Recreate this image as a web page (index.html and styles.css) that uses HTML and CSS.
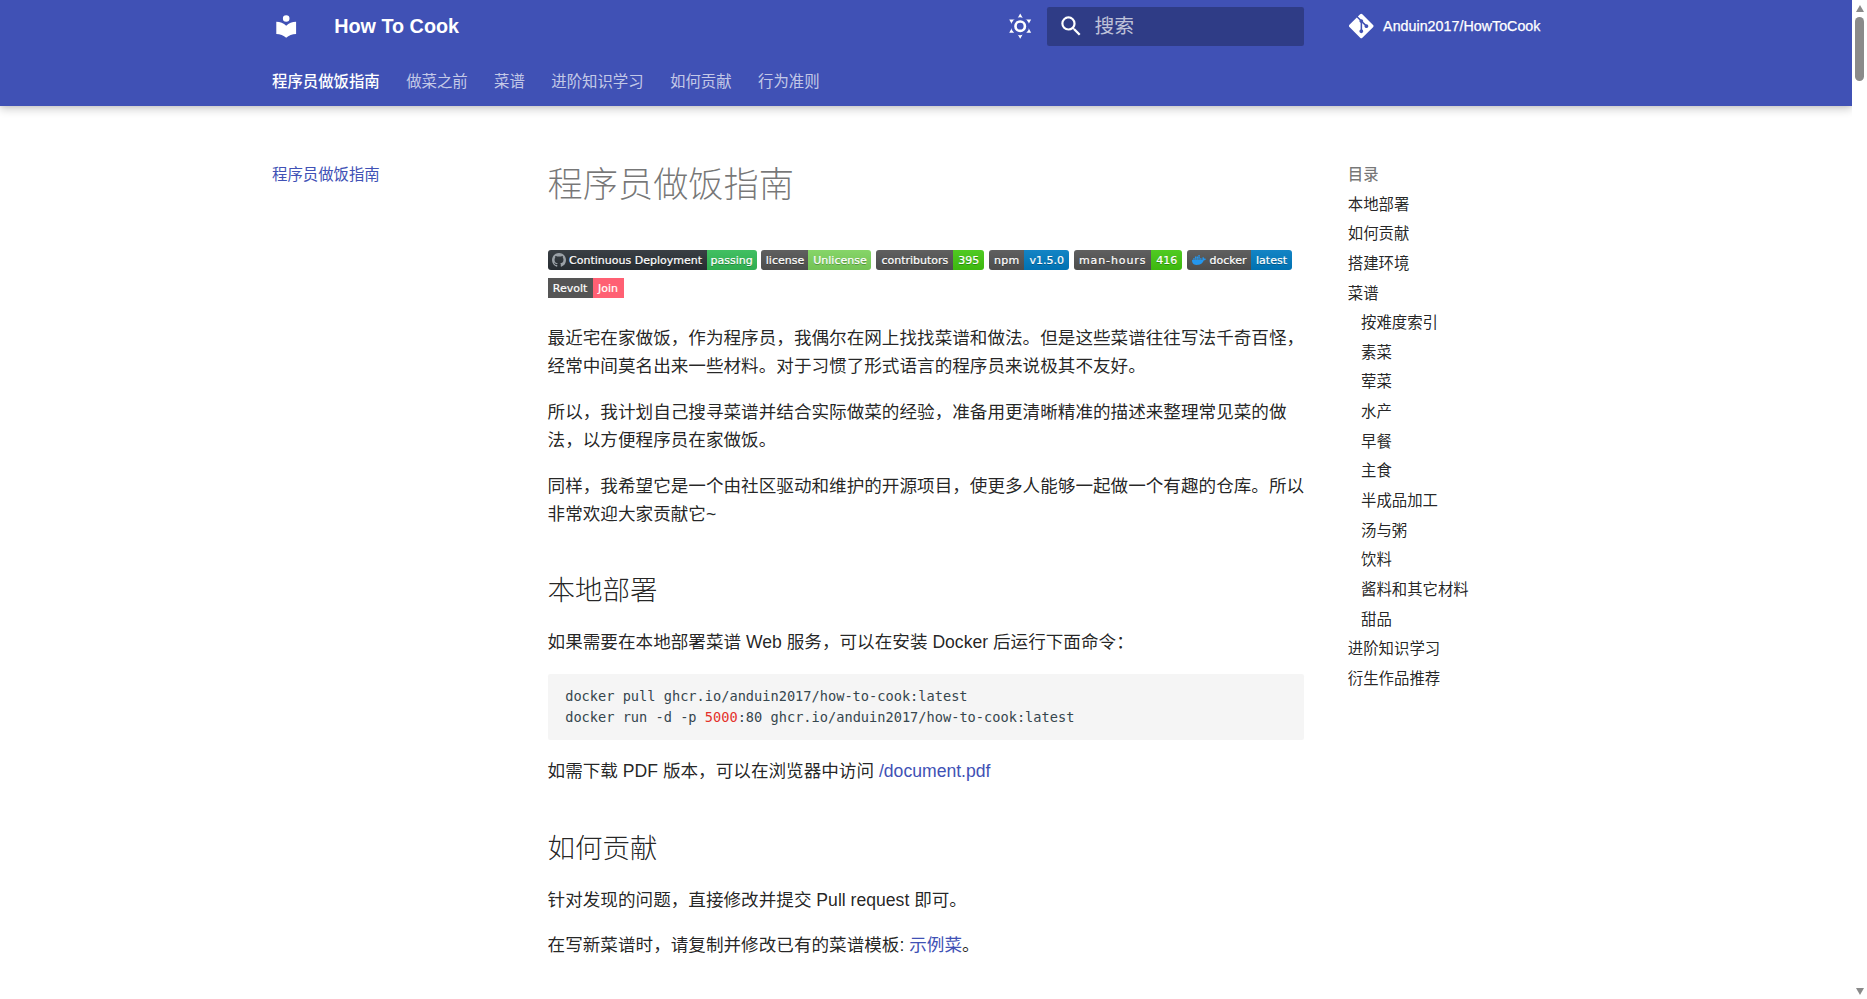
FILE: index.html
```html
<!DOCTYPE html>
<html lang="zh-CN">
<head>
<meta charset="utf-8">
<title>How To Cook</title>
<link rel="stylesheet" href="styles.css">
</head>
<body>
<div class="page">
  <div class="viewport">
    <header class="header">
      <div class="header-inner">
        <a class="logo" href="#"><svg class="icon" viewBox="0 0 24 24"><path d="M12 8a3 3 0 0 0 3-3 3 3 0 0 0-3-3 3 3 0 0 0-3 3 3 3 0 0 0 3 3m0 3.54C9.64 9.35 6.5 8 3 8v11c3.5 0 6.64 1.35 9 3.54 2.36-2.19 5.5-3.54 9-3.54V8c-3.5 0-6.64 1.35-9 3.54Z"/></svg></a>
        <div class="site-title">How To Cook</div>
        <button class="palette" type="button"><svg class="icon" viewBox="0 0 24 24"><path d="M12 .5 22 18 2 18Z"/><path d="M12 23.500 2 6 22 6Z"/><circle class="palette-gap" cx="12" cy="12" r="8.200"/><circle class="palette-ring" cx="12" cy="12" r="4.300"/></svg></button>
        <div class="search"><svg class="icon search-icon" viewBox="0 0 24 24"><path d="M9.500 3A6.500 6.500 0 0 1 16 9.500c0 1.610-.590 3.090-1.560 4.230l.270.270h.790l5 5-1.500 1.500-5-5v-.790l-.270-.270A6.516 6.516 0 0 1 9.500 16 6.500 6.500 0 0 1 3 9.500 6.500 6.500 0 0 1 9.500 3m0 2C7 5 5 7 5 9.500S7 14 9.500 14 14 12 14 9.500 12 5 9.500 5Z"/></svg><span class="search-label">搜索</span></div>
        <a class="source" href="#"><svg class="git-icon" viewBox="0 0 448 512"><path d="M439.550 236.050 244 40.450a28.870 28.870 0 0 0-40.810 0l-40.660 40.630 51.520 51.520c27.060-9.140 52.680 16.770 43.390 43.680l49.660 49.660c34.230-11.800 61.180 31 35.470 56.690-26.490 26.490-70.210-2.870-56-37.340L240.220 199v121.850c25.300 12.540 22.260 41.850 9.080 55a34.340 34.340 0 0 1-48.550 0c-17.570-17.600-11.070-46.910 11.250-56v-123c-20.800-8.510-24.600-30.740-18.640-45L142.570 101 8.450 235.140a28.860 28.860 0 0 0 0 40.810l195.610 195.600a28.860 28.860 0 0 0 40.800 0l194.690-194.690a28.860 28.860 0 0 0 0-40.810z"/></svg><span class="repo">Anduin2017/HowToCook</span></a>
      </div>
      <nav class="tabs">
        <a class="tab tab-active" href="#">程序员做饭指南</a>
        <a class="tab" href="#">做菜之前</a>
        <a class="tab" href="#">菜谱</a>
        <a class="tab" href="#">进阶知识学习</a>
        <a class="tab" href="#">如何贡献</a>
        <a class="tab" href="#">行为准则</a>
      </nav>
    </header>

    <main class="grid">
      <aside class="sidebar-primary">
        <a class="nav-active" href="#">程序员做饭指南</a>
      </aside>

      <article class="content">
        <h1>程序员做饭指南</h1>
        <p>
          <span class="badge"><span class="seg seg-gh"><svg class="gh-logo" viewBox="0 0 16 16"><path d="M8 0C3.580 0 0 3.580 0 8c0 3.540 2.290 6.530 5.470 7.590.400.070.550-.170.550-.380 0-.190-.010-.820-.010-1.490-2.010.370-2.530-.490-2.690-.940-.090-.230-.480-.940-.820-1.130-.280-.150-.680-.520-.010-.530.630-.010 1.080.580 1.230.820.720 1.210 1.870.870 2.330.660.070-.520.280-.870.510-1.070-1.780-.200-3.640-.890-3.640-3.950 0-.870.310-1.590.820-2.150-.080-.200-.360-1.020.080-2.120 0 0 .670-.210 2.200.820.640-.180 1.320-.270 2-.270.680 0 1.360.090 2 .270 1.530-1.040 2.200-.820 2.200-.820.440 1.100.160 1.920.080 2.120.510.560.820 1.270.820 2.150 0 3.070-1.870 3.750-3.650 3.950.290.250.540.730.540 1.480 0 1.070-.010 1.930-.010 2.200 0 .210.150.460.550.380A8.013 8.013 0 0016 8c0-4.420-3.580-8-8-8z"/></svg>Continuous Deployment</span><span class="seg seg-pass">passing</span></span>
          <span class="badge"><span class="seg seg-license">license</span><span class="seg seg-unlicense">Unlicense</span></span>
          <span class="badge"><span class="seg seg-contrib">contributors</span><span class="seg seg-count">395</span></span>
          <span class="badge"><span class="seg seg-npm">npm</span><span class="seg seg-ver">v1.5.0</span></span>
          <span class="badge"><span class="seg seg-hours">man-hours</span><span class="seg seg-count seg-count-hours">416</span></span>
          <span class="badge"><span class="seg seg-docker"><svg class="docker-logo" viewBox="0 0 24 24"><path d="M13.983 11.078h2.119a.186.186 0 00.186-.185V9.006a.186.186 0 00-.186-.186h-2.119a.185.185 0 00-.185.185v1.888c0 .102.083.185.185.185m-2.954-5.430h2.118a.186.186 0 00.186-.186V3.574a.186.186 0 00-.186-.185h-2.118a.185.185 0 00-.185.185v1.888c0 .102.082.185.185.186m0 2.716h2.118a.187.187 0 00.186-.186V6.290a.186.186 0 00-.186-.185h-2.118a.185.185 0 00-.185.185v1.887c0 .102.082.185.185.186m-2.930 0h2.120a.186.186 0 00.184-.186V6.290a.185.185 0 00-.185-.185H8.100a.185.185 0 00-.185.185v1.887c0 .102.083.185.185.186m-2.964 0h2.119a.186.186 0 00.185-.186V6.290a.185.185 0 00-.185-.185H5.136a.186.186 0 00-.186.185v1.887c0 .102.084.185.186.186m5.893 2.715h2.118a.186.186 0 00.186-.185V9.006a.186.186 0 00-.186-.186h-2.118a.185.185 0 00-.185.185v1.888c0 .102.082.185.185.185m-2.930 0h2.120a.185.185 0 00.184-.185V9.006a.185.185 0 00-.184-.186h-2.120a.185.185 0 00-.184.185v1.888c0 .102.083.185.185.185m-2.964 0h2.119a.185.185 0 00.185-.185V9.006a.185.185 0 00-.184-.186h-2.120a.186.186 0 00-.186.186v1.887c0 .102.084.185.186.185m-2.920 0h2.120a.185.185 0 00.184-.185V9.006a.185.185 0 00-.184-.186h-2.120a.185.185 0 00-.185.185v1.888c0 .102.083.185.185.185M23.763 9.890c-.065-.051-.672-.510-1.954-.510-.338.001-.676.030-1.010.087-.248-1.700-1.653-2.530-1.716-2.566l-.344-.199-.226.327c-.284.438-.490.922-.612 1.430-.230.970-.090 1.882.403 2.661-.595.332-1.550.413-1.744.420H.751a.751.751 0 00-.750.748 11.376 11.376 0 00.692 4.062c.545 1.428 1.355 2.480 2.410 3.124 1.180.723 3.100 1.137 5.275 1.137.983.003 1.963-.086 2.930-.266a12.248 12.248 0 003.823-1.389c.980-.567 1.860-1.288 2.610-2.136 1.252-1.418 1.998-2.997 2.553-4.400h.221c1.372 0 2.215-.549 2.680-1.009.309-.293.550-.650.707-1.046l.098-.288Z"/></svg>docker</span><span class="seg seg-latest">latest</span></span>
          <span class="badge badge-flat"><span class="seg seg-revolt">Revolt</span><span class="seg seg-join">Join</span></span>
        </p>
        <p>最近宅在家做饭，作为程序员，我偶尔在网上找找菜谱和做法。但是这些菜谱往往写法千奇百怪，<br>经常中间莫名出来一些材料。对于习惯了形式语言的程序员来说极其不友好。</p>
        <p>所以，我计划自己搜寻菜谱并结合实际做菜的经验，准备用更清晰精准的描述来整理常见菜的做<br>法，以方便程序员在家做饭。</p>
        <p>同样，我希望它是一个由社区驱动和维护的开源项目，使更多人能够一起做一个有趣的仓库。所以<br>非常欢迎大家贡献它~</p>
        <h2>本地部署</h2>
        <p>如果需要在本地部署菜谱 Web 服务，可以在安装 Docker 后运行下面命令：</p>
        <pre class="code"><code>docker pull ghcr.io/anduin2017/how-to-cook:latest
docker run -d -p <span class="code-num">5000</span>:80 ghcr.io/anduin2017/how-to-cook:latest</code></pre>
        <p>如需下载 PDF 版本，可以在浏览器中访问 <a href="#">/document.pdf</a></p>
        <h2>如何贡献</h2>
        <p>针对发现的问题，直接修改并提交 Pull request 即可。</p>
        <p>在写新菜谱时，请复制并修改已有的菜谱模板: <a href="#">示例菜</a>。</p>
      </article>

      <aside class="sidebar-toc">
        <div class="toc-title">目录</div>
        <ul class="toc">
          <li><a href="#">本地部署</a></li>
          <li><a href="#">如何贡献</a></li>
          <li><a href="#">搭建环境</a></li>
          <li><a href="#">菜谱</a>
            <ul class="toc-sub">
              <li><a href="#">按难度索引</a></li>
              <li><a href="#">素菜</a></li>
              <li><a href="#">荤菜</a></li>
              <li><a href="#">水产</a></li>
              <li><a href="#">早餐</a></li>
              <li><a href="#">主食</a></li>
              <li><a href="#">半成品加工</a></li>
              <li><a href="#">汤与粥</a></li>
              <li><a href="#">饮料</a></li>
              <li><a href="#">酱料和其它材料</a></li>
              <li><a href="#">甜品</a></li>
            </ul>
          </li>
          <li><a href="#">进阶知识学习</a></li>
          <li><a href="#">衍生作品推荐</a></li>
        </ul>
      </aside>
    </main>
  </div>

  <div class="scrollbar">
    <span class="arrow-up"></span>
    <span class="thumb"></span>
    <span class="arrow-down"></span>
  </div>
</div>
</body>
</html>
```
FILE: styles.css
```css
html { font-size: 22px; }
* { box-sizing: border-box; }
body {
  margin: 0;
  background: #fff;
  color: rgba(0,0,0,.87);
  font-family: "Liberation Sans", "Noto Sans CJK SC", sans-serif;
  overflow: hidden;
}
a { text-decoration: none; color: inherit; }

.page { display: flex; height: 100vh; overflow: hidden; }
.viewport { flex: 1; min-width: 0; overflow: hidden; }

/* scrollbar */
.scrollbar {
  width: 15px;
  flex: none;
  display: flex;
  flex-direction: column;
  align-items: center;
  background: #fff;
  padding: 5px 0 4px;
}
.arrow-up, .arrow-down { width: 0; height: 0; border-left: 4.5px solid transparent; border-right: 4.5px solid transparent; }
.arrow-up { border-bottom: 7px solid #8a8a8a; }
.arrow-down { border-top: 7px solid #8a8a8a; margin-top: auto; }
.thumb { width: 9px; height: 64px; margin-top: 5px; border-radius: 4.5px; background: #8a8a8a; }

/* header */
.header {
  background: #4051b5;
  color: #fff;
  height: 4.8rem;
  box-shadow: 0 0 .2rem rgba(0,0,0,.1), 0 .2rem .4rem rgba(0,0,0,.2);
}
.header-inner {
  max-width: 61rem;
  height: 2.4rem;
  margin: 0 auto;
  padding: 0 .2rem;
  display: flex;
  align-items: center;
}
.icon { display: block; width: 1.2rem; height: 1.2rem; fill: currentColor; }
.logo { margin: .2rem; padding: .4rem; }
.site-title {
  flex: 1;
  margin-left: 1rem;
  margin-right: .4rem;
  font-size: .9rem;
  font-weight: 700;
}
.palette {
  border: 0;
  padding: 0;
  margin-right: .6rem;
  background: none;
  color: #fff;
}
.palette-gap { fill: #4051b5; }
.palette-ring { fill: none; stroke: #fff; stroke-width: 2.4; }
.search {
  width: 11.7rem;
  height: 1.8rem;
  display: flex;
  align-items: center;
  padding-left: .5rem;
  border-radius: .1rem;
  background: rgba(0,0,0,.26);
}
.search-label { margin-left: 10px; padding-bottom: 3px; font-size: .9rem; color: rgba(255,255,255,.7); }
.source {
  width: 11.7rem;
  margin-left: 1.4rem;
  display: flex;
  align-items: center;
}
.git-icon { width: 24.5px; height: 28px; margin-left: 14.2px; fill: currentColor; flex: none; }
.repo { margin-left: 9.2px; font-size: .65rem; font-weight: 400; white-space: nowrap; -webkit-text-stroke: .25px #fff; }

/* tabs */
.tabs {
  max-width: 61rem;
  height: 2.4rem;
  margin: 0 auto;
  padding-left: 17px;
  display: flex;
  gap: 1.2rem;
  font-size: .7rem;
  line-height: 1.3;
}
.tab { margin-top: 19.6px; color: rgba(255,255,255,.7); }
.tab-active { color: #fff; font-weight: 500; }

/* grid */
.grid {
  max-width: 61rem;
  margin: 0 auto;
  display: flex;
  align-items: flex-start;
}
.sidebar-primary {
  flex: none;
  width: 12.1rem;
  padding: 2.7rem 17px 0;
  font-size: .7rem;
  line-height: 1.3;
}
.nav-active { color: #4051b5; }
.sidebar-toc {
  flex: none;
  width: 12.1rem;
  padding: 2.7rem 17px 0;
  font-size: .7rem;
  line-height: 1.3;
}
.toc-title { color: rgba(0,0,0,.54); font-weight: 500; }
.toc, .toc-sub { list-style: none; margin: 0; padding: 0; }
.toc-sub { padding-left: .6rem; }
.toc a { display: block; margin-top: .625em; }

/* content */
.content {
  flex: 1;
  min-width: 0;
  margin: 0 1.2rem;
  padding-top: 2.5rem;
  font-size: .8rem;
  line-height: 1.6;
}
.content a { color: #4051b5; }
.content p { margin: 1em 0; }
h1 {
  margin: 0 0 calc(1.25em - 1px);
  padding-top: 1px;
  font-size: 2em;
  font-weight: 300;
  line-height: 1.3;
  color: rgba(0,0,0,.54);
}
h2 {
  margin: 1.6em 0 .64em;
  font-size: 1.5625em;
  font-weight: 300;
  line-height: 1.4;
}
.code {
  margin: 1em 0;
  padding: 11.7px 17.6px;
  background: #f5f5f5;
  border-radius: .1rem;
  color: #36464e;
  font-family: "DejaVu Sans Mono", "Liberation Mono", monospace;
  font-size: 13.65px;
  line-height: 21.2px;
}
.code-num { color: #e4312b; }

/* badges */
.badge {
  display: inline-block;
  height: 20px;
  overflow: hidden;
  border-radius: 3px;
  white-space: nowrap;
  font-family: "DejaVu Sans", sans-serif;
  font-size: 11px;
  line-height: 21px;
  color: #fff;
  text-shadow: 0 1px 0 rgba(1,1,1,.3);
  -webkit-text-stroke: .2px #fff;
}
.badge-flat { border-radius: 0; text-shadow: none; }
.seg {
  display: inline-block;
  height: 20px;
  vertical-align: top;
  text-align: center;
  background-color: #555;
  background-image: linear-gradient(rgba(187,187,187,.1), rgba(0,0,0,.1));
}
.gh-logo, .docker-logo { width: 14px; height: 14px; margin-right: 3px; vertical-align: -3px; }
.gh-logo { fill: #9aa0a6; -webkit-text-stroke: 0; }
.docker-logo { fill: #2496ed; margin-right: 4px; }
.seg-gh { width: 159px; background-color: #2b3137; }
.seg-pass { width: 50px; background-color: #34c058; }
.seg-license { width: 47px; }
.seg-unlicense { width: 63px; background-color: #80d85f; }
.seg-contrib { width: 77px; }
.seg-count { width: 31px; background-color: #44cc11; }
.seg-npm { width: 35px; letter-spacing: .2px; }
.seg-ver { width: 45px; background-color: #007ec6; }
.seg-hours { width: 77px; letter-spacing: .9px; }
.seg-docker { width: 64px; }
.seg-latest { width: 41px; background-color: #007ec6; }
.seg-revolt { width: 45px; background-image: none; }
.seg-join { width: 31px; background-color: #ff6073; background-image: none; }
```
